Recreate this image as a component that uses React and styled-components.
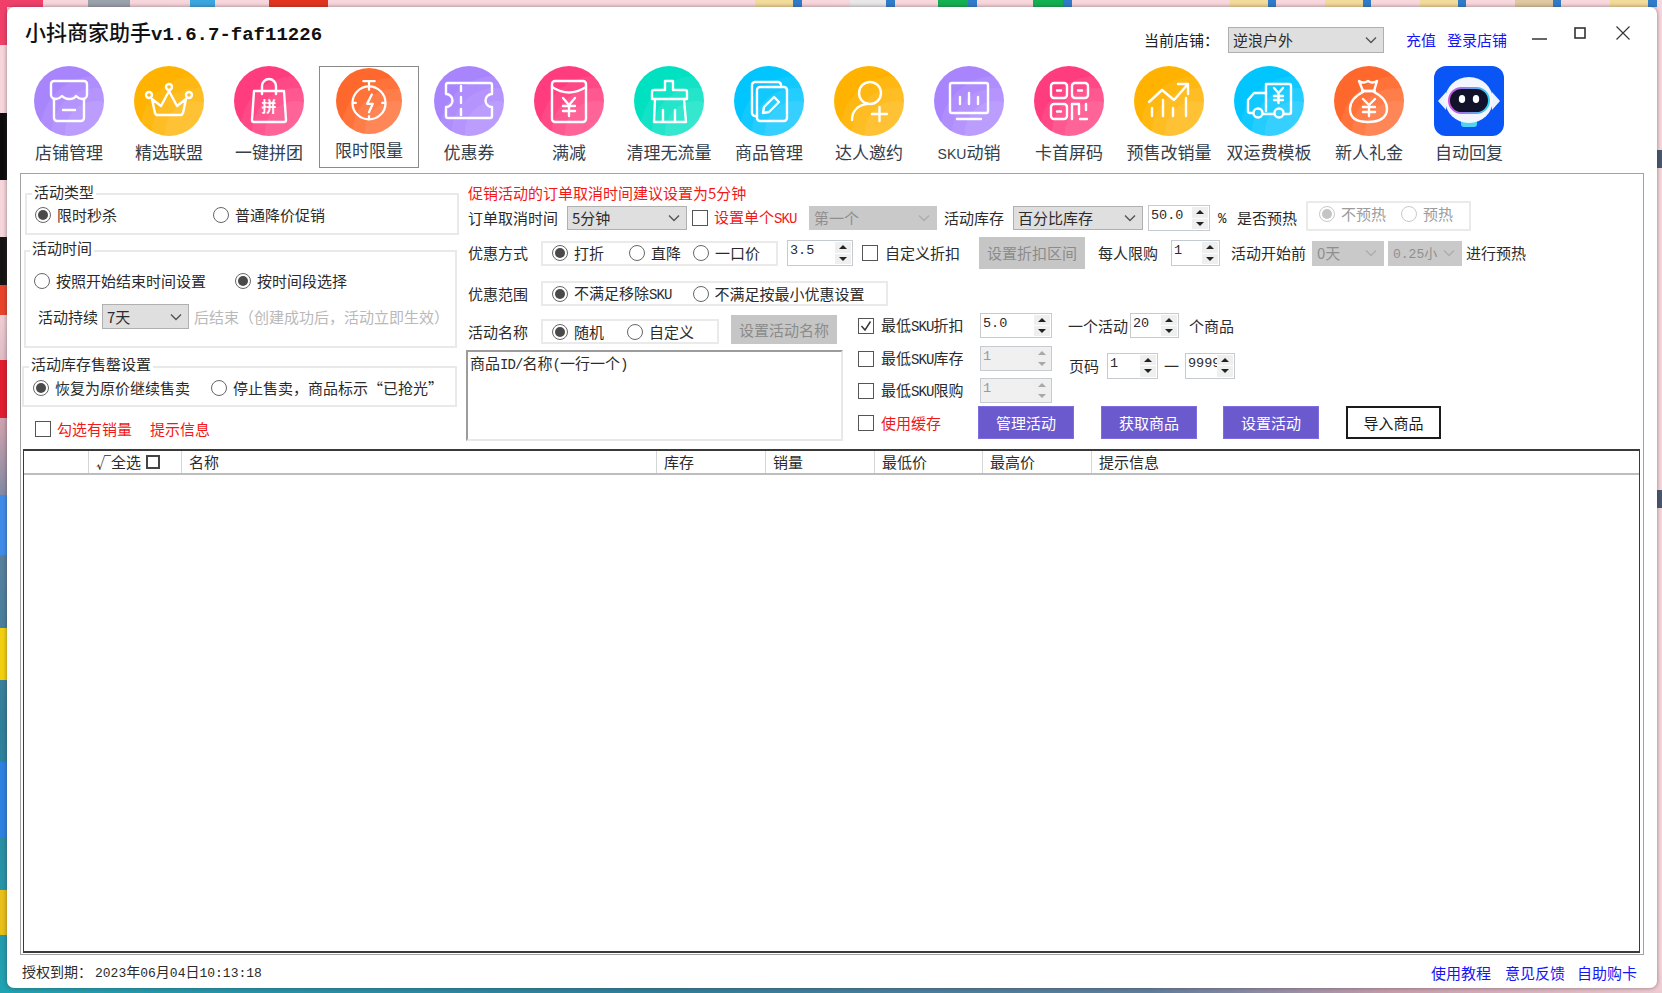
import React from "react";
import styled, { createGlobalStyle } from "styled-components";

const CJK = '"Noto Sans CJK SC", "Liberation Sans", sans-serif';
const MONO = '"Liberation Mono", "Noto Sans CJK SC", monospace';

const Global = createGlobalStyle`
  html, body { margin: 0; padding: 0; }
  body { font-family: ${CJK}; font-size: 15px; line-height: 20px; color: #2b2b2b; }
  * { box-sizing: border-box; }
`;

const Desktop = styled.div`
  position: relative;
  width: 1662px;
  height: 993px;
  padding: 7px 5px 5px 7px;
  overflow: hidden;
  background: linear-gradient(202deg, #f8d8dc 0%, #f6d6db 58%, #c9a0ae 66%, #5f7f9e 72%, #2f7f9a 84%, #1fa3b2 100%);
`;

const DesktopBit = styled.i`
  position: absolute;
  left: ${(p) => p.$x}px;
  top: ${(p) => p.$y}px;
  width: ${(p) => p.$w}px;
  height: ${(p) => p.$h}px;
  background: ${(p) => p.$c};
`;

const Window = styled.div`
  position: relative;
  width: 1650px;
  height: 981px;
  background: #fff;
  border-radius: 7px;
  box-shadow: 0 0 4px rgba(60, 40, 50, 0.55);
  display: flex;
  flex-direction: column;
`;

const Header = styled.header`
  height: 59px;
  flex: none;
  display: flex;
  align-items: center;
  padding: 0 27px 0 18px;
`;

const Title = styled.h1`
  margin: 0 auto 7px 0;
  font-size: 21px;
  line-height: 28px;
  font-weight: 500;
  color: #111;
  white-space: nowrap;
`;

const TitleVersion = styled.span`
  font-family: ${MONO};
  font-size: 19px;
  font-weight: 700;
`;

const StoreLabel = styled.span`
  margin-top: 7px;
  width: 66px;
  white-space: nowrap;
  color: #222;
`;

const Link = styled.a`
  color: #1616f5;
  margin-left: ${(p) => p.$ml || 0}px;
  margin-top: ${(p) => p.$mt || 0}px;
  white-space: nowrap;
`;

const WinButton = styled.svg`
  display: block;
  flex: none;
  margin-left: ${(p) => p.$ml}px;
  margin-bottom: ${(p) => p.$mb || 0}px;
`;

const Toolbar = styled.nav`
  height: 102px;
  flex: none;
  margin-left: 12px;
  display: flex;
`;

const Tool = styled.div`
  width: 100px;
  height: 102px;
  flex: none;
  display: flex;
  flex-direction: column;
  align-items: center;
  padding-top: ${(p) => (p.$active ? 2 : 0)}px;
  box-shadow: ${(p) => (p.$active ? "inset 0 0 0 1px #8a8a8a" : "none")};
  svg { display: block; flex: none; }
`;

const ToolLabel = styled.span`
  margin-top: 4px;
  font-size: 17px;
  line-height: 24px;
  color: #34404c;
  white-space: nowrap;
`;

const Panel = styled.main`
  width: 1624px;
  height: 782px;
  flex: none;
  margin: 5px 0 0 13px;
  border: 1px solid #a2a2a2;
  padding: 0 3px 1px 2px;
  display: flex;
  flex-direction: column;
`;

const Form = styled.section`
  height: 274px;
  flex: none;
  display: flex;
  margin-left: -2px;
`;

const LeftCol = styled.div`
  width: 445px;
  flex: none;
  padding-top: 19px;
`;

const RightCol = styled.div`
  flex: 1;
  min-width: 0;
  padding: 11px 0 0 2px;
`;

const GroupBox = styled.div`
  width: ${(p) => p.$w}px;
  height: ${(p) => p.$h}px;
  margin-left: ${(p) => p.$ml || 0}px;
  margin-top: ${(p) => p.$mt || 0}px;
  border: 2px solid #e9e9e9;
`;

const Legend = styled.div`
  width: fit-content;
  height: 16px;
  line-height: 16px;
  margin: ${(p) => p.$mt}px 0 0 ${(p) => p.$ml}px;
  padding: 0 2px;
  background: #fff;
  white-space: nowrap;
`;

const GroupRow = styled.div`
  height: ${(p) => p.$h || 20}px;
  margin-top: ${(p) => p.$mt || 0}px;
  display: flex;
  align-items: center;
`;

const OptBox = styled.div`
  flex: none;
  width: ${(p) => p.$w}px;
  height: ${(p) => p.$h || 25}px;
  margin-left: ${(p) => p.$ml || 0}px;
  margin-bottom: ${(p) => p.$mb || 0}px;
  padding-bottom: ${(p) => p.$pb || 0}px;
  border: 2px solid #eaeaea;
  display: flex;
  align-items: center;
`;

const Opt = styled.label`
  display: flex;
  align-items: center;
  gap: 6px;
  flex: none;
  margin-left: ${(p) => p.$ml || 0}px;
  white-space: nowrap;
  color: ${(p) => (p.$off ? "#9c9c9c" : "#2b2b2b")};
`;

const RadioMark = styled.span`
  position: relative;
  width: 16px;
  height: 16px;
  flex: none;
  border-radius: 50%;
  border: 1px solid ${(p) => (p.$off ? "#c9c9c9" : "#666")};
  background: #fff;
  ${(p) =>
    p.$on
      ? `&::after { content: ""; position: absolute; inset: 2px; border-radius: 50%;
           background: ${p.$off ? "#c4c4c4" : "#4a4a4a"}; }`
      : ""}
`;

const CheckMark = styled.span`
  width: 16px;
  height: 16px;
  flex: none;
  display: block;
  border: 1px solid #555;
  background: #fff;
  margin-left: ${(p) => p.$ml || 0}px;
  svg { display: block; }
`;

const Text = styled.span`
  flex: none;
  display: block;
  width: ${(p) => (p.$w ? `${p.$w}px` : "auto")};
  margin-left: ${(p) => p.$ml || 0}px;
  color: ${(p) => (p.$red ? "#f31818" : p.$muted ? "#b9b9b9" : "#2b2b2b")};
  white-space: nowrap;
`;

const Lat = styled.span`
  font-family: ${MONO};
  font-size: 14px;
  letter-spacing: -0.9px;
`;

const NavLat = styled.span`
  font-family: "Liberation Sans", sans-serif;
  font-size: 14px;
`;

const NumLat = styled.span`
  font-family: ${MONO};
  font-size: 13px;
`;

const Note = styled.div`
  height: 16px;
  line-height: 16px;
  color: #f31818;
  white-space: nowrap;
`;

const Row = styled.div`
  height: ${(p) => p.$h}px;
  margin-top: ${(p) => p.$mt}px;
  display: flex;
  align-items: center;
`;

const SelectBox = styled.div`
  flex: none;
  width: ${(p) => p.$w}px;
  height: ${(p) => p.$h || 24}px;
  margin-left: ${(p) => p.$ml || 0}px;
  margin-top: ${(p) => p.$mt || 0}px;
  padding: 0 6px 0 4px;
  display: flex;
  align-items: center;
  justify-content: space-between;
  overflow: hidden;
  white-space: nowrap;
  background: ${(p) => (p.$off ? "#c9c9c9" : "#dfdfdf")};
  border: 1px solid ${(p) => (p.$off ? "#c9c9c9" : "#b0b0b0")};
  color: ${(p) => (p.$off ? "#8f8f8f" : "#2b2b2b")};
  svg { flex: none; display: block; }
`;

const SpinBox = styled.div`
  flex: none;
  width: ${(p) => p.$w}px;
  height: ${(p) => p.$h || 26}px;
  margin-left: ${(p) => p.$ml || 0}px;
  padding: 1px;
  border: 1px solid #c6cbd2;
  background: ${(p) => (p.$off ? "#f0f0f0" : "#fff")};
  display: flex;
`;

const SpinValue = styled.span`
  flex: 1;
  min-width: 0;
  overflow: hidden;
  padding-left: 1px;
  font-family: ${MONO};
  font-size: 13.5px;
  line-height: 18px;
  white-space: nowrap;
  color: ${(p) => (p.$off ? "#9a9a9a" : "#2b2b2b")};
`;

const SpinButtons = styled.span`
  width: 16px;
  flex: none;
  display: flex;
  flex-direction: column;
  gap: 1px;
`;

const SpinArrow = styled.span`
  flex: 1;
  background: #efefef;
  display: flex;
  align-items: center;
  justify-content: center;
  &::after {
    content: "";
    border-left: 4px solid transparent;
    border-right: 4px solid transparent;
    ${(p) => (p.$down ? "border-top" : "border-bottom")}: 4px solid ${(p) => (p.$off ? "#a8a8a8" : "#222")};
  }
`;

const GrayButton = styled.div`
  flex: none;
  width: ${(p) => p.$w}px;
  height: ${(p) => p.$h}px;
  margin-left: ${(p) => p.$ml || 0}px;
  background: #c6c6c6;
  color: #8b8b8b;
  display: flex;
  align-items: center;
  justify-content: center;
  white-space: nowrap;
`;

const ActionButton = styled.div`
  flex: none;
  width: ${(p) => p.$w}px;
  height: 33px;
  margin-left: ${(p) => p.$ml}px;
  display: flex;
  align-items: center;
  justify-content: center;
  white-space: nowrap;
  background: ${(p) => (p.$outline ? "#fff" : "#6a5acd")};
  color: ${(p) => (p.$outline ? "#1b1b1b" : "#fff")};
  border: ${(p) => (p.$outline ? "2px solid #1b1b1b" : "1px solid #7c6de0")};
`;

const Lower = styled.div`
  margin-top: 7px;
  display: flex;
  align-items: flex-start;
`;

const NameBlock = styled.div`
  width: 390px;
  flex: none;
`;

const NameRow = styled.div`
  height: 31px;
  display: flex;
  align-items: flex-end;
`;

const NameLabel = styled.span`
  width: 73px;
  flex: none;
  height: 25px;
  line-height: 25px;
`;

const Memo = styled.div`
  width: 377px;
  height: 91px;
  margin: 6px 0 0 -2px;
  padding: 1px 2px;
  border-top: 2px solid #9c9c9c;
  border-left: 2px solid #9c9c9c;
  border-right: 2px solid #e8e8e8;
  border-bottom: 2px solid #e8e8e8;
  color: #2b2b2b;
  white-space: nowrap;
`;

const Options = styled.div`
  flex: none;
`;

const OptRow = styled.div`
  height: ${(p) => p.$h}px;
  margin-top: ${(p) => p.$mt || 0}px;
  display: flex;
  align-items: center;
`;

const CheckLabel = styled.span`
  flex: none;
  width: ${(p) => p.$w || 100}px;
  margin-left: 7px;
  color: ${(p) => (p.$red ? "#f31818" : "#2b2b2b")};
  white-space: nowrap;
`;

const PageGroup = styled.div`
  display: flex;
  align-items: center;
  margin-top: 14px;
`;

const Table = styled.div`
  flex: 1;
  margin-top: 1px;
  border: 1px solid #3a3a3a;
  border-top-width: 2px;
  border-bottom-width: 2px;
  min-height: 0;
`;

const TableHead = styled.div`
  height: 24px;
  display: grid;
  grid-template-columns: 64px 93px 475px 109px 109px 108px 109px 1fr;
  border-bottom: 2px solid #bdbdbd;
`;

const HeadCell = styled.div`
  border-left: ${(p) => (p.$first ? "none" : "1px solid #d6d6d6")};
  padding-left: 7px;
  display: flex;
  align-items: center;
  gap: 5px;
  white-space: nowrap;
  line-height: 22px;
`;

const SelectAll = styled.span`
  display: flex;
  align-items: center;
`;

const HeadBox = styled.span`
  width: 14px;
  height: 14px;
  display: block;
  border: 2px solid #444;
`;

const Status = styled.footer`
  flex: 1;
  display: flex;
  align-items: center;
  padding: 2px 20px 0 15px;
`;

const StatusText = styled.span`
  margin-right: auto;
  white-space: nowrap;
  font-size: 14px;
`;

const StatusDate = styled.span`
  margin-left: 3px;
`;

const chevron = (c) => (
  <svg width="12" height="8" viewBox="0 0 12 8" fill="none" stroke={c} strokeWidth="1.4">
    <path d="M1 1.5 6 6.5 11 1.5" />
  </svg>
);

const Select = ({ value, off, ...rest }) => (
  <SelectBox $off={off} {...rest}>
    <span>{value}</span>
    {chevron(off ? "#adadad" : "#555")}
  </SelectBox>
);

const Spin = ({ value, off, ...rest }) => (
  <SpinBox $off={off} {...rest}>
    <SpinValue $off={off}>{value}</SpinValue>
    <SpinButtons>
      <SpinArrow $off={off} />
      <SpinArrow $off={off} $down />
    </SpinButtons>
  </SpinBox>
);

const Radio = ({ on, off, label, ml }) => (
  <Opt $ml={ml} $off={off}>
    <RadioMark $on={on} $off={off} />
    {label}
  </Opt>
);

const Check = ({ on, ml }) => (
  <CheckMark $ml={ml}>
    {on && (
      <svg width="14" height="14" viewBox="0 0 14 14" fill="none" stroke="#333" strokeWidth="1.4">
        <path d="M2.5 7 6 11 11.5 2.5" />
      </svg>
    )}
  </CheckMark>
);

const Disc = ({ id, color, size = 70, children }) => (
  <svg width={size} height={size} viewBox="0 0 70 70">
    <clipPath id={id}>
      <circle cx="35" cy="35" r="35" />
    </clipPath>
    <circle cx="35" cy="35" r="35" fill={color} />
    <g clipPath={`url(#${id})`} fill="#fff">
      <circle cx="62" cy="66" r="56" opacity=".07" />
      <circle cx="62" cy="66" r="44" opacity=".08" />
      <circle cx="62" cy="66" r="31" opacity=".08" />
    </g>
    <g fill="none" stroke="#fff" strokeWidth="2.4" strokeLinecap="round" strokeLinejoin="round">
      {children}
    </g>
  </svg>
);

const PURPLE = "#a985fd";
const AMBER = "#ffb300";
const PINK = "#ff3c7e";
const ORANGE = "#ff682c";
const TEAL = "#00e1c2";
const BLUE = "#00c5ff";

const Robot = () => (
  <svg width="70" height="70" viewBox="0 0 70 70">
    <defs>
      <linearGradient id="visorEdge" x1="0" x2="1">
        <stop offset="0" stopColor="#d050e0" />
        <stop offset="1" stopColor="#30d0f0" />
      </linearGradient>
    </defs>
    <rect width="70" height="70" rx="12" fill="#0a55f6" />
    <path d="M27 54h16v4a3 3 0 0 1-3 3H30a3 3 0 0 1-3-3z" fill="#4fd4f6" />
    <path d="M12 26 4 35l8 9zM58 26l8 9-8 9z" fill="#eef2ff" />
    <ellipse cx="35" cy="34" rx="24" ry="23" fill="#f4f6ff" />
    <rect x="15" y="22" width="40" height="25" rx="12.5" fill="#12122a" stroke="url(#visorEdge)" strokeWidth="2" />
    <ellipse cx="28" cy="33" rx="3.2" ry="4" fill="#fff" />
    <ellipse cx="42" cy="33" rx="3.2" ry="4" fill="#fff" />
  </svg>
);

const tools = [
  { label: "店铺管理", color: PURPLE, icon: (
    <>
      <path d="M20 15h30a3 3 0 0 1 3 3v11c0 3-3 4-5 4s-4-1-6-3c-1 2-4 3-7 3s-5-1-7-3c-2 2-4 3-6 3s-5-1-5-4V18a3 3 0 0 1 3-3z" />
      <path d="M20 33v19a3 3 0 0 0 3 3h24a3 3 0 0 0 3-3V33M29 44h12" />
    </>
  ) },
  { label: "精选联盟", color: AMBER, icon: (
    <>
      <path d="M18 33l3 14a3 3 0 0 0 3 2h22a3 3 0 0 0 3-2l3-14-9 7-8-15-8 15z" />
      <circle cx="15" cy="29" r="3" />
      <circle cx="35" cy="21" r="3" />
      <circle cx="55" cy="29" r="3" />
    </>
  ) },
  { label: "一键拼团", color: PINK, icon: (
    <>
      <path d="M20 25h30l2 29a2 2 0 0 1-2 2H20a2 2 0 0 1-2-2z" />
      <path d="M28 28v-8a7 7 0 0 1 14 0v8" />
      <text x="35" y="46" fontSize="15" fontWeight="700" fill="#fff" stroke="none" textAnchor="middle" fontFamily={CJK}>拼</text>
    </>
  ) },
  { label: "限时限量", color: ORANGE, active: true, icon: (
    <>
      <path d="M29 14h12M35 14v6" />
      <circle cx="35" cy="37" r="17.5" />
      <path d="M35 20v3M35 51v3M18 37h3M49 37h3" />
      <path d="M38 28l-5 10h6l-4 9" />
    </>
  ) },
  { label: "优惠券", color: PURPLE, icon: (
    <>
      <path d="M14 17h42a2 2 0 0 1 2 2v9a6.5 6.5 0 0 0 0 13v9a2 2 0 0 1-2 2H14a2 2 0 0 1-2-2V41a6.5 6.5 0 0 0 0-13v-9a2 2 0 0 1 2-2z" />
      <path d="M27 20v5M27 31v6M27 43v6" />
    </>
  ) },
  { label: "满减", color: PINK, icon: (
    <>
      <rect x="18" y="15" width="34" height="41" rx="3" />
      <path d="M18 21q17 11 34 0" />
      <path d="M29 32l6 7 6-7M35 39v11M29 40h12M29 45h12" />
    </>
  ) },
  { label: "清理无流量", color: TEAL, icon: (
    <>
      <path d="M31 15h8v9h12a2 2 0 0 1 2 2v7H18v-7a2 2 0 0 1 2-2h11z" />
      <path d="M21 33l-1 23h32l-2-23M29 44v12M41 44v12" />
    </>
  ) },
  { label: "商品管理", color: BLUE, icon: (
    <>
      <path d="M23 50h-2a3 3 0 0 1-3-3V19a3 3 0 0 1 3-3h23a3 3 0 0 1 3 3v2" />
      <rect x="23" y="21" width="30" height="34" rx="3" />
      <path d="M29 47l1-6 10-10 5 5-10 10z" />
    </>
  ) },
  { label: "达人邀约", color: AMBER, icon: (
    <>
      <circle cx="36" cy="27" r="11" />
      <path d="M18 54c0-9 6-15 15-16M38 48h15M45.5 41v14" />
    </>
  ) },
  { label: <><NavLat>SKU</NavLat>动销</>, color: PURPLE, icon: (
    <>
      <rect x="16" y="17" width="38" height="30" rx="2" />
      <path d="M26 31v7M35 27v11M44 31v7M23 53h24" />
    </>
  ) },
  { label: "卡首屏码", color: PINK, icon: (
    <>
      <rect x="17" y="17" width="16" height="15" rx="3" />
      <rect x="38" y="17" width="16" height="15" rx="3" />
      <rect x="17" y="38" width="16" height="15" rx="3" />
      <path d="M23 24.5h4M44 24.5h4M23 45.5h4M38 53V38h7v10M52 38v6M46 53h7" />
    </>
  ) },
  { label: "预售改销量", color: AMBER, icon: (
    <>
      <path d="M15 36l13-12 12 10 14-16M44 18h10v10" />
      <path d="M18 42v8M29 34v16M39 42v8M52 32v18" />
    </>
  ) },
  { label: "双运费模板", color: BLUE, icon: (
    <>
      <path d="M32 18h23a2 2 0 0 1 2 2v26a2 2 0 0 1-2 2h-5M40 48h-11M32 45V18" />
      <path d="M19 47h-3a2 2 0 0 1-2-2V34l6-7h12" />
      <circle cx="24" cy="47" r="4.5" />
      <circle cx="45" cy="47" r="4.5" />
      <path d="M40 22l4.5 5 4.5-5M44.5 27v10M40 30h9M40 34h9" />
    </>
  ) },
  { label: "新人礼金", color: ORANGE, icon: (
    <>
      <path d="M25 15c3 2 6 2 9 0 3 2 6 2 9 0l-3 10H29z" />
      <path d="M28 25h13" />
      <path d="M29 26C21 30 16 36 16 43c0 9 7 13 18 13s19-4 19-13c0-7-5-13-13-17" />
      <path d="M29 33l6 6 6-6M35 39v11M29 41h12M29 46h12" />
    </>
  ) },
  { label: "自动回复", robot: true },
];

const bits = [
  [0, 0, 43, 7, "#f0406a"], [88, 0, 42, 7, "#9aa3ac"], [190, 0, 25, 7, "#3aa7e0"], [269, 0, 59, 7, "#e2341c"],
  [755, 0, 38, 7, "#f2dc9a"], [793, 0, 9, 7, "#2f7ccb"], [850, 0, 36, 7, "#e8e8e8"], [886, 0, 9, 7, "#2f7ccb"],
  [938, 0, 30, 7, "#12b050"], [968, 0, 9, 7, "#2f7ccb"], [1033, 0, 30, 7, "#12b050"], [1063, 0, 9, 7, "#2f7ccb"],
  [1230, 0, 38, 7, "#f2dc9a"], [1268, 0, 8, 7, "#2f7ccb"], [1325, 0, 38, 7, "#f2dc9a"], [1363, 0, 8, 7, "#2f7ccb"],
  [1420, 0, 38, 7, "#f2dc9a"], [1458, 0, 8, 7, "#2f7ccb"], [1515, 0, 38, 7, "#e0c8a0"], [1553, 0, 8, 7, "#2f7ccb"],
  [1610, 0, 38, 7, "#f2dc9a"], [1648, 0, 9, 7, "#2f7ccb"],
  [0, 7, 7, 38, "#f0406a"], [0, 113, 7, 67, "#0c0c0c"], [0, 237, 7, 48, "#141414"], [0, 285, 7, 30, "#e8442c"],
  [0, 360, 7, 58, "#e01c30"], [0, 495, 7, 60, "#3f8ce8"], [0, 628, 7, 52, "#f2d010"], [0, 762, 7, 75, "#2f80e0"],
  [0, 890, 7, 45, "#e8c018"], [1655, 150, 7, 18, "#4a5870"], [1655, 490, 7, 18, "#4a5870"],
];

export default function App() {
  return (
    <Desktop>
      <Global />
      {bits.map(([x, y, w, h, c]) => (
        <DesktopBit key={`${x}-${y}`} $x={x} $y={y} $w={w} $h={h} $c={c} />
      ))}
      <Window>
        <Header>
          <Title>
            小抖商家助手<TitleVersion>v1.6.7-faf11226</TitleVersion>
          </Title>
          <StoreLabel>{"当前店铺\uFF1A"}</StoreLabel>
          <Select value="逆浪户外" $w={156} $h={26} $ml={18} $mt={7} />
          <Link $ml={22} $mt={7}>充值</Link>
          <Link $ml={11} $mt={7}>登录店铺</Link>
          <WinButton $ml={25} $mb={-4} width="15" height="8" viewBox="0 0 15 8">
            <path d="M0 4h15" stroke="#333" strokeWidth="1.5" />
          </WinButton>
          <WinButton $ml={27} $mb={7} width="12" height="12" viewBox="0 0 12 12">
            <rect x="1" y="1" width="10" height="10" fill="none" stroke="#333" strokeWidth="1.6" />
          </WinButton>
          <WinButton $ml={30} $mb={7} width="14" height="14" viewBox="0 0 14 14">
            <path d="M.5.5l13 13M13.5.5l-13 13" stroke="#333" strokeWidth="1.1" fill="none" />
          </WinButton>
        </Header>

        <Toolbar>
          {tools.map((t, i) => (
            <Tool key={i} $active={t.active}>
              {t.robot ? (
                <Robot />
              ) : (
                <Disc id={`disc-${i}`} color={t.color} size={t.active ? 66 : 70}>
                  {t.icon}
                </Disc>
              )}
              <ToolLabel>{t.label}</ToolLabel>
            </Tool>
          ))}
        </Toolbar>

        <Panel>
          <Form>
            <LeftCol>
              <GroupBox $w={434} $h={42} $ml={4}>
                <Legend $mt={-11} $ml={5}>活动类型</Legend>
                <GroupRow $mt={5}>
                  <Radio on label="限时秒杀" ml={8} />
                  <Radio label="普通降价促销" ml={96} />
                </GroupRow>
              </GroupBox>
              <GroupBox $w={433} $h={98} $ml={3} $mt={15}>
                <Legend $mt={-12} $ml={4}>活动时间</Legend>
                <GroupRow $mt={15}>
                  <Radio label="按照开始结束时间设置" ml={8} />
                  <Radio on label="按时间段选择" ml={29} />
                </GroupRow>
                <GroupRow $mt={13} $h={25}>
                  <Text $w={60} $ml={12}>活动持续</Text>
                  <Select value="7天" $w={87} $h={25} $ml={4} />
                  <Text $muted $ml={5}>{"后结束\uFF08创建成功后\uFF0C活动立即生效\uFF09"}</Text>
                </GroupRow>
              </GroupBox>
              <GroupBox $w={435} $h={41} $ml={1} $mt={18}>
                <Legend $mt={-12} $ml={5}>活动库存售罄设置</Legend>
                <GroupRow $mt={6}>
                  <Radio on label="恢复为原价继续售卖" ml={9} />
                  <Radio label={"停止售卖\uFF0C商品标示\u201C已抢光\u201D"} ml={21} />
                </GroupRow>
              </GroupBox>
              <GroupRow $mt={12}>
                <Check ml={14} />
                <Text $red $ml={6}>勾选有销量</Text>
                <Text $red $ml={18}>提示信息</Text>
              </GroupRow>
            </LeftCol>

            <RightCol>
              <Note>促销活动的订单取消时间建议设置为5分钟</Note>

              <Row $h={26} $mt={4}>
                <Text $w={90}>订单取消时间</Text>
                <Select value="5分钟" $w={120} $ml={9} />
                <Check ml={5} />
                <Text $red $w={83} $ml={6}>设置单个<Lat>SKU</Lat></Text>
                <Select off value="第一个" $w={128} $ml={12} />
                <Text $w={60} $ml={7}>活动库存</Text>
                <Select value="百分比库存" $w={130} $ml={9} />
                <Spin value="50.0" $w={62} $ml={5} />
                <Text $w={10} $ml={8}><Lat>%</Lat></Text>
                <Text $w={60} $ml={9}>是否预热</Text>
                <OptBox $w={165} $h={30} $ml={9} $mb={4} $pb={5}>
                  <Radio off on label="不预热" ml={11} />
                  <Radio off label="预热" ml={15} />
                </OptBox>
              </Row>

              <Row $h={32} $mt={6}>
                <Text $w={60}>优惠方式</Text>
                <OptBox $w={237} $ml={13}>
                  <Radio on label="打折" ml={9} />
                  <Radio label="直降" ml={25} />
                  <Radio label="一口价" ml={12} />
                </OptBox>
                <Spin value="3.5" $w={66} $ml={9} />
                <Check ml={9} />
                <Text $w={74} $ml={7}>自定义折扣</Text>
                <GrayButton $w={106} $h={32} $ml={20}>设置折扣区间</GrayButton>
                <Text $w={60} $ml={13}>每人限购</Text>
                <Spin value="1" $w={49} $ml={13} />
                <Text $w={75} $ml={11}>活动开始前</Text>
                <Select off value="0天" $w={72} $h={25} $ml={6} />
                <Select off value={<NumLat>0.25小</NumLat>} $w={74} $h={25} $ml={4} />
                <Text $ml={4}>进行预热</Text>
              </Row>

              <Row $h={25} $mt={12}>
                <Text $w={60}>优惠范围</Text>
                <OptBox $w={347} $ml={13}>
                  <Radio on label={<span>不满足移除<Lat>SKU</Lat></span>} ml={9} />
                  <Radio label="不满足按最小优惠设置" ml={21} />
                </OptBox>
              </Row>

              <Lower>
                <NameBlock>
                  <NameRow>
                    <NameLabel>活动名称</NameLabel>
                    <OptBox $w={178}>
                      <Radio on label="随机" ml={9} />
                      <Radio label="自定义" ml={23} />
                    </OptBox>
                    <GrayButton $w={106} $h={29} $ml={12}>设置活动名称</GrayButton>
                  </NameRow>
                  <Memo>商品<Lat>ID/</Lat>名称<Lat>(</Lat>一行一个<Lat>)</Lat></Memo>
                </NameBlock>

                <Options>
                  <OptRow $h={25}>
                    <Check on />
                    <CheckLabel><span>最低</span><Lat>SKU</Lat>折扣</CheckLabel>
                    <Spin value="5.0" $w={72} $h={25} $ml={-1} />
                    <Text $w={59} $ml={16}>一个活动</Text>
                    <Spin value="20" $w={49} $h={25} $ml={3} />
                    <Text $ml={10}>个商品</Text>
                  </OptRow>
                  <OptRow $h={25} $mt={8}>
                    <Check />
                    <CheckLabel><span>最低</span><Lat>SKU</Lat>库存</CheckLabel>
                    <Spin off value="1" $w={72} $h={25} $ml={-1} />
                    <PageGroup>
                      <Text $w={30} $ml={17}>页码</Text>
                      <Spin value="1" $w={51} $ml={8} />
                      <Text $w={15} $ml={6}>一</Text>
                      <Spin value="9999" $w={50} $ml={6} />
                    </PageGroup>
                  </OptRow>
                  <OptRow $h={25} $mt={7}>
                    <Check />
                    <CheckLabel><span>最低</span><Lat>SKU</Lat>限购</CheckLabel>
                    <Spin off value="1" $w={72} $h={25} $ml={-1} />
                  </OptRow>
                  <OptRow $h={33} $mt={3}>
                    <Check />
                    <CheckLabel $red $w={97}>使用缓存</CheckLabel>
                    <ActionButton $w={96} $ml={0}>管理活动</ActionButton>
                    <ActionButton $w={96} $ml={27}>获取商品</ActionButton>
                    <ActionButton $w={96} $ml={26}>设置活动</ActionButton>
                    <ActionButton $outline $w={95} $ml={27}>导入商品</ActionButton>
                  </OptRow>
                </Options>
              </Lower>
            </RightCol>
          </Form>

          <Table>
            <TableHead>
              <HeadCell $first />
              <HeadCell>
                <SelectAll>√全选</SelectAll>
                <HeadBox />
              </HeadCell>
              <HeadCell>名称</HeadCell>
              <HeadCell>库存</HeadCell>
              <HeadCell>销量</HeadCell>
              <HeadCell>最低价</HeadCell>
              <HeadCell>最高价</HeadCell>
              <HeadCell>提示信息</HeadCell>
            </TableHead>
          </Table>
        </Panel>

        <Status>
          <StatusText>
            {"授权到期\uFF1A"}
            <StatusDate>
              <NumLat>2023</NumLat>年<NumLat>06</NumLat>月<NumLat>04</NumLat>日<NumLat>10:13:18</NumLat>
            </StatusDate>
          </StatusText>
          <Link>使用教程</Link>
          <Link $ml={14}>意见反馈</Link>
          <Link $ml={12}>自助购卡</Link>
        </Status>
      </Window>
    </Desktop>
  );
}
